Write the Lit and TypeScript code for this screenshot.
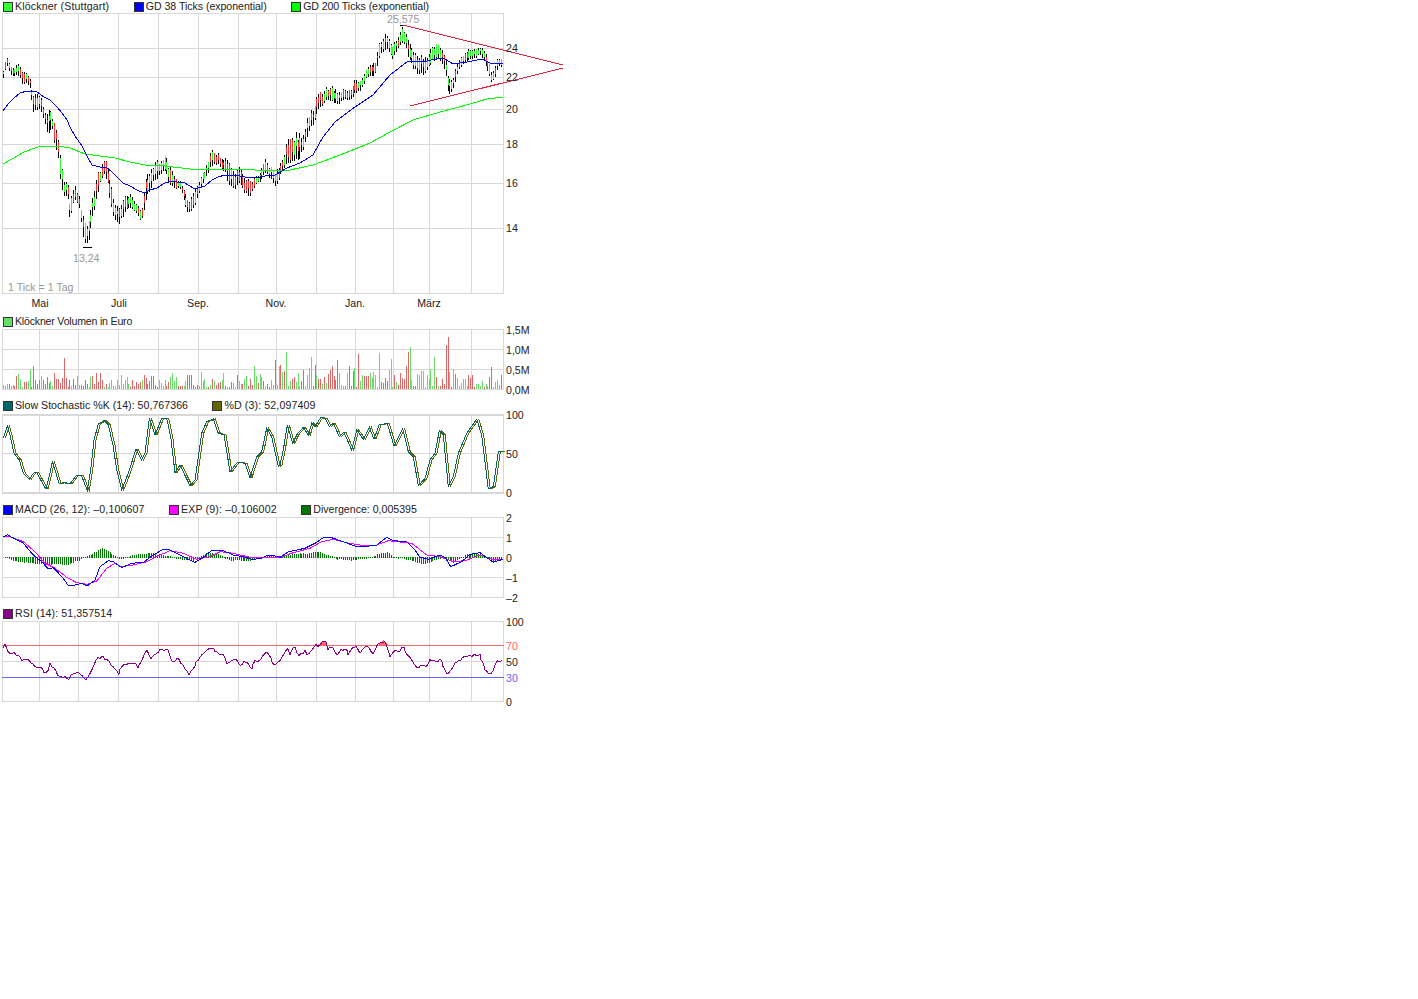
import { LitElement, css, html, svg } from 'lit'
import { customElement } from 'lit/decorators.js'

type Pt = [number, number]

// traced from 3x crops, so [x, y] here are crop pixels
const crop = (flat: number[], ox: number, oy: number): Pt[] => {
	const out: Pt[] = []
	for (let i = 0; i < flat.length; i += 2) out.push([ox + flat[i] / 3, oy + flat[i + 1] / 3])
	return out
}
const pts = (list: Pt[]) => list.map(([x, y]) => `${x.toFixed(1)},${y.toFixed(1)}`).join(' ')

const rng = (seed: number) => () => {
	seed = (seed * 1664525 + 1013904223) % 4294967296
	return seed / 4294967296
}

const lerp = (rows: number[][], x: number, col: number) => {
	if (x <= rows[0][0]) return rows[0][col]
	for (let i = 1; i < rows.length; i++) {
		if (x <= rows[i][0]) {
			const a = rows[i - 1]
			const b = rows[i]
			return a[col] + ((b[col] - a[col]) * (x - a[0])) / (b[0] - a[0])
		}
	}
	return rows[rows.length - 1][col]
}

const VERTICALS = [39, 78, 118, 158, 198, 238, 276, 316, 355, 393, 429, 471]
const TICK = 1.9

// [x, high, low] of the price bars
const PRICE = [
	[3, 70, 80], [6, 52, 65], [10, 65, 76], [14, 68, 76], [18, 62, 76], [22, 70, 85], [27, 70, 85], [30, 78, 90],
	[33, 95, 112], [36, 92, 112], [39, 92, 110], [42, 100, 115], [45, 110, 128], [48, 107, 140], [52, 113, 130],
	[55, 125, 147], [58, 135, 160], [61, 155, 190], [64, 180, 197], [67, 180, 197], [70, 205, 222], [73, 185, 205],
	[76, 185, 200], [79, 195, 210], [83, 215, 240], [87, 222, 248], [90, 210, 235], [93, 190, 215], [97, 168, 197],
	[100, 168, 185], [104, 155, 175], [108, 165, 190], [112, 190, 215], [115, 205, 222], [119, 205, 225],
	[122, 195, 220], [126, 195, 210], [130, 192, 210], [134, 200, 213], [141, 210, 222], [145, 175, 205],
	[150, 170, 190], [155, 160, 182], [160, 158, 175], [165, 155, 172], [170, 165, 190], [175, 175, 190],
	[180, 180, 190], [187, 195, 213], [190, 200, 214], [195, 185, 205], [200, 175, 190], [205, 170, 180],
	[210, 150, 170], [215, 150, 165], [220, 155, 168], [225, 155, 175], [230, 165, 190], [235, 170, 190],
	[240, 165, 185], [245, 175, 195], [250, 180, 197], [255, 175, 185], [260, 170, 182], [265, 155, 175],
	[270, 165, 180], [275, 170, 188], [282, 160, 172], [287, 137, 165], [295, 132, 165], [302, 133, 155],
	[308, 113, 135], [313, 107, 125], [318, 93, 110], [325, 87, 103], [330, 85, 103], [337, 90, 105],
	[343, 88, 102], [350, 90, 100], [356, 77, 95], [360, 80, 92], [367, 63, 78], [375, 63, 78], [380, 38, 55],
	[386, 33, 50], [392, 42, 60], [397, 38, 52], [403, 25, 42], [407, 37, 55], [413, 50, 70], [417, 55, 74],
	[422, 55, 76], [427, 52, 72], [435, 43, 60], [440, 42, 62], [445, 55, 72], [448, 75, 96], [453, 75, 92],
	[458, 60, 72], [467, 48, 62], [475, 48, 58], [480, 45, 56], [485, 52, 65], [489, 62, 76], [492, 70, 85],
	[496, 62, 76], [498, 55, 68], [501, 58, 68],
]

const GD38: Pt[] = [
	[3, 111], [8, 104], [14, 98], [20, 93], [27, 91], [37, 92], [44, 97], [50, 100], [57, 107], [62, 113], [67, 120],
	[70, 127], [75, 136], [82, 146], [88, 158], [92, 165], [100, 167], [106, 167], [112, 172], [118, 178], [123, 183],
	[130, 186], [137, 190], [144, 193], [150, 190], [157, 188], [163, 184], [170, 181], [177, 182], [185, 183],
	[193, 188], [198, 188], [205, 186], [212, 180], [218, 177], [225, 175], [235, 175], [245, 177], [255, 178],
	[265, 176], [275, 175], [287, 168], [300, 163], [313, 155], [323, 137], [335, 122], [355, 107], [373, 95],
	[390, 75], [408, 61], [417, 61], [427, 61], [440, 58], [445, 59], [453, 64], [467, 62], [482, 59], [490, 63], [503, 63],
]

const GD200: Pt[] = [
	[3, 164], [12, 159], [24, 152], [38, 147], [58, 146], [70, 148], [85, 154], [100, 156], [115, 158], [130, 162],
	[145, 165], [165, 166], [190, 169], [215, 170], [240, 169], [270, 171], [290, 170], [313, 165], [340, 155],
	[370, 143], [390, 132], [413, 120], [440, 112], [470, 104], [487, 99], [503, 97],
]

const VOLUME_SPIKES: [number, number, string][] = [
	[29, 20, 'g'], [33, 23, 'r'], [63, 31, 'r'], [253, 23, 'g'], [275, 29, 'r'], [281, 24, 'r'], [287, 37, 'g'],
	[311, 32, 'g'], [337, 29, 'r'], [359, 35, 'r'], [379, 36, 'g'], [391, 30, 'g'], [407, 37, 'r'], [409, 42, 'g'],
	[435, 32, 'g'], [445, 44, 'r'], [447, 52, 'r'], [491, 22, 'r'],
]

const STOCH = [
	...crop([10, 385, 22, 348, 30, 375, 42, 430, 58, 450, 70, 490, 88, 508, 100, 490, 110, 487, 125, 515, 138, 538, 150, 490, 157, 455, 165, 480, 178, 522, 190, 518, 210, 522, 228, 497, 245, 498, 262, 542, 272, 480, 282, 390, 295, 342, 312, 332, 325, 345, 340, 410, 350, 480, 365, 540, 385, 490, 408, 417, 425, 450, 435, 430, 448, 325, 465, 375, 485, 325, 500, 325, 512, 380, 525, 488, 540, 465, 552, 490, 570, 527, 585, 510, 605, 370, 620, 335, 640, 327, 655, 370, 672, 375, 690, 485, 712, 457, 735, 460, 750, 503, 770, 440, 785, 425, 800, 355, 815, 380, 835, 470], 0, 310),
	...crop([0, 465, 10, 420, 22, 345, 38, 400, 52, 372, 70, 352, 85, 375, 95, 340, 105, 350, 122, 323, 135, 325, 148, 350, 160, 340, 178, 380, 192, 367, 215, 420, 230, 360, 250, 388, 268, 352, 282, 388, 297, 345, 322, 340, 342, 408, 368, 355, 385, 425, 400, 440, 415, 527, 435, 505, 450, 450, 465, 430, 478, 362, 490, 375, 505, 530, 520, 500, 535, 430, 560, 370, 590, 328, 605, 375, 625, 537, 640, 530, 655, 425, 668, 425], 280, 310),
]

const MACD = [
	...crop([10, 110, 22, 104, 40, 115, 70, 130, 100, 165, 125, 185, 145, 207, 160, 203, 190, 235, 205, 257, 225, 255, 245, 250, 262, 258, 285, 240, 300, 200, 325, 182, 340, 185, 365, 203, 395, 190, 430, 187, 460, 165, 490, 148, 510, 150, 540, 165, 565, 178, 585, 187, 605, 175, 635, 152, 670, 152, 700, 165, 730, 170, 755, 178, 780, 176, 800, 167, 820, 167], 0, 500),
	...crop([0, 172, 25, 155, 75, 145, 105, 130, 130, 113, 155, 113, 190, 125, 225, 138, 250, 140, 290, 135, 320, 112, 340, 122, 380, 125, 405, 150, 420, 172, 445, 178, 480, 165, 495, 172, 512, 200, 545, 185, 570, 163, 600, 158, 640, 187, 668, 178], 280, 500),
]

const EXP = [
	...crop([10, 110, 30, 110, 70, 125, 105, 155, 135, 190, 165, 205, 200, 232, 230, 248, 262, 253, 290, 243, 320, 205, 345, 190, 365, 200, 400, 195, 440, 185, 480, 165, 510, 152, 550, 160, 590, 178, 630, 170, 660, 155, 700, 160, 750, 172, 790, 173], 0, 500),
	...crop([0, 172, 40, 158, 90, 145, 125, 125, 160, 118, 200, 128, 240, 135, 290, 135, 325, 122, 395, 130, 440, 165, 480, 170, 520, 185, 555, 182, 600, 165, 640, 180, 668, 178], 280, 500),
]

// [x, offset from the zero line, up is positive]
const DIVERGENCE = [
	[3, 2], [10, -3], [33, -6], [45, -7], [68, -7], [78, -3], [83, -1], [93, 4], [103, 9], [113, 2], [120, -2],
	[133, 2], [150, 4], [167, 1], [180, -2], [193, -3], [207, 4], [217, 3], [230, -3], [250, -3], [267, 1],
	[280, 1], [297, 3], [320, 5], [337, -2], [353, -3], [367, -1], [370, 0], [380, 3], [387, 5], [393, 0],
	[403, -1], [423, -7], [437, -2], [443, 0], [453, -5], [467, 3], [480, 3], [493, -5], [503, 0],
]

const RSI_TRACE = [
	...crop([8, 445, 16, 430, 25, 458, 45, 460, 65, 480, 85, 478, 105, 500, 125, 505, 142, 525, 150, 492, 175, 525, 190, 530, 205, 538, 225, 518, 245, 522, 262, 540, 275, 510, 290, 475, 310, 472, 330, 490, 355, 520, 370, 498, 400, 487, 415, 505, 440, 452, 455, 475, 480, 450, 505, 447, 515, 488, 535, 475, 550, 495, 568, 522, 595, 480, 620, 450, 637, 440, 650, 460, 670, 460, 680, 492, 710, 480, 725, 497, 735, 480, 755, 505, 765, 485, 780, 482, 800, 455, 825, 498, 840, 480], 0, 500),
	...crop([0, 482, 22, 440, 30, 468, 45, 437, 55, 468, 75, 455, 85, 465, 100, 440, 115, 435, 135, 422, 145, 452, 155, 440, 170, 462, 190, 447, 205, 460, 225, 440, 240, 460, 260, 437, 280, 460, 295, 432, 312, 420, 322, 440, 332, 470, 345, 455, 360, 452, 368, 437, 385, 465, 415, 508, 425, 490, 440, 505, 450, 475, 470, 490, 480, 470, 503, 527, 525, 490, 545, 475, 565, 467, 600, 465, 615, 505, 635, 527, 650, 478, 658, 490, 668, 480], 280, 500),
]

// the real line moves on every tick, the trace only has its turning points
const jagged = (list: Pt[], seed: number, amount: number): Pt[] => {
	const r = rng(seed)
	const rows = list.map(([x, y]) => [x, y])
	const out: Pt[] = []
	for (let x = list[0][0]; x <= list[list.length - 1][0]; x += TICK) {
		out.push([Math.round(x), lerp(rows, x, 1) + (r() - 0.5) * amount])
	}
	return out
}

const RSI = jagged(RSI_TRACE, 11, 3)

const shift = (list: Pt[], dx: number): Pt[] => list.map(([x, y]) => [x + dx, y] as Pt)

// [colour, label, letter spacing in px so the label gets the width of the original bitmap font]
type LegendItem = [string, string, number?]

@customElement('app-root')
export class AppRoot extends LitElement {
	static styles = css`
		:host {
			display: block;
			min-height: 999px;
			background: #fff;
			color: #222;
			font-family: 'Liberation Sans', Arial, sans-serif;
			font-size: 10.6px;
		}

		.legend {
			display: flex;
			align-items: flex-start;
			gap: 24.5px;
			height: 14px;
			padding-left: 3px;
			line-height: 13px;
			white-space: nowrap;
		}

		.legend span {
			display: flex;
			align-items: center;
			gap: 2px;
		}

		.legend i {
			box-sizing: border-box;
			width: 10px;
			height: 10px;
			border: 1px solid #333;
		}

		.first {
			height: 315px;
		}

		.first .legend {
			height: 13px;
		}

		.plot {
			display: block;
			overflow: visible;
		}

		.grid {
			stroke: #d8d8d8;
			stroke-width: 1;
		}

		.line {
			fill: none;
			stroke-width: 1;
		}

		text {
			font-family: 'Liberation Sans', Arial, sans-serif;
			font-size: 10.6px;
			fill: #222;
		}

		text.note {
			fill: #999;
		}

		text.hi {
			fill: #f66;
		}

		text.lo {
			fill: #66f;
		}
	`

	private legend(items: LegendItem[]) {
		return html`<div class="legend">
			${items.map(
				([color, label, track]) =>
					html`<span style="letter-spacing:${track ?? 0}px"><i style="background:${color}"></i>${label}</span>`,
			)}
		</div>`
	}

	private grid(top: number, bottom: number, ys: number[]) {
		return svg`
			${[2, ...VERTICALS, 503].map((x) => svg`<line class="grid" x1=${x + 0.5} x2=${x + 0.5} y1=${top} y2=${bottom} />`)}
			${[top, ...ys, bottom].map((y) => svg`<line class="grid" x1="2" x2="504" y1=${y + 0.5} y2=${y + 0.5} />`)}
		`
	}

	private labels(rows: [string, number, string?][]) {
		return rows.map(([t, y, cls]) => svg`<text class=${cls ?? ''} x="506" y=${y + 4}>${t}</text>`)
	}

	private line(list: Pt[], color: string) {
		return svg`<polyline class="line" stroke=${color} points=${pts(list)} />`
	}

	private priceBars() {
		const r = rng(7)
		const out = []
		let up = true
		for (let t = 3; t <= 501; t += TICK) {
			const x = Math.round(t) + 0.5
			const top = lerp(PRICE, t, 1)
			const bottom = lerp(PRICE, t, 2)
			const hi = top + r() * (bottom - top) * 0.3
			let lo = bottom - r() * (bottom - top) * 0.2
			if (lo - hi < 6) lo = hi + 6
			const a = hi + (lo - hi) * (r() * 0.3)
			const b = lo - (lo - hi) * (0.1 + r() * 0.45)
			if (r() > 0.65) up = !up
			out.push(svg`
				<line stroke="#000" x1=${x} x2=${x} y1=${hi} y2=${lo} />
				<line stroke=${up ? '#3f3' : '#f33'} x1=${x} x2=${x} y1=${a} y2=${b} />
			`)
		}
		return out
	}

	private volumeBars() {
		const r = rng(21)
		const out = []
		let up = true
		for (let t = 3; t <= 501; t += TICK) {
			const x = Math.round(t)
			const spike = VOLUME_SPIKES.find((s) => Math.abs(s[0] - t) < TICK / 2)
			const h = spike ? spike[1] : 2 + Math.pow(r(), 1.6) * (x > 270 && x < 460 ? 22 : 15)
			if (r() > 0.6) up = !up
			const green = spike ? spike[2] === 'g' : up
			out.push(svg`<rect x=${x} y=${389 - h} width="1" height=${h} fill=${green ? '#6d6' : '#d66'} />`)
		}
		return out
	}

	private divergenceBars() {
		const r = rng(3)
		const out = []
		for (let t = 5; t <= 501; t += TICK) {
			const d = lerp(DIVERGENCE, t, 1) + (r() - 0.5)
			const y = d > 0 ? 557 - d : 557
			out.push(svg`<rect x=${Math.round(t)} y=${y} width="1" height=${Math.abs(d) + 0.5} fill="#070" />`)
		}
		return out
	}

	render() {
		return html`
			<div class="first">
				${this.legend([
					['#3f3', 'Klöckner (Stuttgart)', 0.15],
					['#00f', 'GD 38 Ticks (exponential)', -0.04],
					['#0f0', 'GD 200 Ticks (exponential)', -0.08],
				])}
				<svg class="plot" width="570" height="297" viewBox="0 13 570 297" shape-rendering="crispEdges">
					${this.grid(13, 293, [48, 77, 109, 144, 183, 228])}
					${this.priceBars()}
					<line stroke="#000" x1="83" x2="92" y1="247.5" y2="247.5" />
					<line stroke="#000" x1="400" x2="407" y1="25.5" y2="25.5" />
					${this.line(GD200, '#0f0')} ${this.line(GD38, '#00f')}
					<line stroke="#e8203a" x1="403" y1="25" x2="563" y2="65" />
					<line stroke="#e8203a" x1="410" y1="106" x2="563" y2="68" />
					${this.labels([['24', 48], ['22', 77], ['20', 109], ['18', 144], ['16', 183], ['14', 228]])}
					<text class="note" x="387" y="23">25,575</text>
					<text class="note" x="73" y="262">13,24</text>
					<text class="note" x="8" y="291">1 Tick = 1 Tag</text>
					<text text-anchor="middle" x="40" y="307">Mai</text>
					<text text-anchor="middle" x="119" y="307">Juli</text>
					<text text-anchor="middle" x="198" y="307">Sep.</text>
					<text text-anchor="middle" x="276" y="307">Nov.</text>
					<text text-anchor="middle" x="355" y="307">Jan.</text>
					<text text-anchor="middle" x="429" y="307">März</text>
				</svg>
			</div>

			${this.legend([['#6d6', 'Klöckner Volumen in Euro', -0.2]])}
			<svg class="plot" width="570" height="70" viewBox="0 329 570 70" shape-rendering="crispEdges">
				${this.grid(329, 389, [349, 369])} ${this.volumeBars()}
				${this.labels([['1,5M', 330], ['1,0M', 350], ['0,5M', 370], ['0,0M', 390]])}
			</svg>

			${this.legend([
				['#066', 'Slow Stochastic %K (14): 50,767366', 0.03],
				['#660', '%D (3): 52,097409', 0.12],
			])}
			<svg class="plot" width="570" height="90" viewBox="0 413 570 90" shape-rendering="crispEdges">
				${this.grid(414, 492, [415, 453, 493])}
				${this.line(shift(STOCH, 2), '#660')} ${this.line(STOCH, '#066')}
				${this.labels([['100', 415], ['50', 454], ['0', 493]])}
			</svg>

			${this.legend([
				['#00f', 'MACD (26, 12): –0,100607', 0.12],
				['#f0f', 'EXP (9): –0,106002', 0.16],
				['#070', 'Divergence: 0,005395'],
			])}
			<svg class="plot" width="570" height="90" viewBox="0 517 570 90" shape-rendering="crispEdges">
				${this.grid(517, 597, [537, 557, 577])} ${this.divergenceBars()}
				${this.line(EXP, '#f0f')} ${this.line(MACD, '#00f')}
				${this.labels([['2', 518], ['1', 538], ['0', 558], ['–1', 578], ['–2', 598]])}
			</svg>

			${this.legend([['#808', 'RSI (14): 51,357514', 0.1]])}
			<svg class="plot" width="570" height="89" viewBox="0 621 570 89" shape-rendering="crispEdges">
				${this.grid(621, 701, [661])}
				<line stroke="#f66" x1="2" x2="504" y1="645.5" y2="645.5" />
				<line stroke="#66f" x1="2" x2="504" y1="677.5" y2="677.5" />
				<polygon fill="#f66" points="317,645 325,641 327,645" />
				<polygon fill="#f66" points="378,645 384,640 388,645" />
				${this.line(RSI, '#808')}
				${this.labels([['100', 622], ['70', 646, 'hi'], ['50', 662], ['30', 678, 'lo'], ['0', 702]])}
			</svg>
		`
	}
}
